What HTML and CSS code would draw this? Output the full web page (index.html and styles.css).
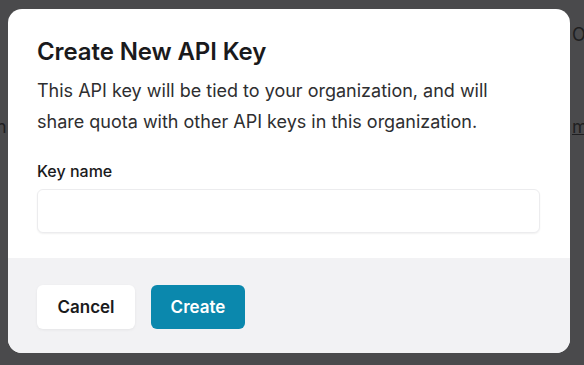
FILE: index.html
```html
<!DOCTYPE html>
<html lang="en">

<head>
    <meta charset="UTF-8">
    <meta name="viewport" content="width=device-width, initial-scale=1.0">
    <title>Create New API Key</title>
    <link rel="stylesheet" href="styles.css">
</head>

<body>
    <div class="page">
        <span class="bg-text bg-top">O:</span>
        <span class="bg-text bg-left">n</span>
        <span class="bg-text bg-right">m</span>
    </div>

    <div class="modal-container">
        <form class="modal">
            <div class="modal-body">
                <h2>Create New API Key</h2>
                <p>This API key will be tied to your organization, and will share quota with other API keys in this organization.</p>
                <label for="key_name">Key name</label>
                <input type="text" id="key_name" name="key_name">
            </div>
            <div class="modal-footer">
                <button type="button" class="btn-cancel">Cancel</button>
                <button type="submit" class="btn-create">Create</button>
            </div>
        </form>
    </div>
</body>

</html>
```

FILE: styles.css
```css
* {
    padding: 0;
    margin: 0;
    box-sizing: border-box;
    font-family: Inter, 'Noto Sans', sans-serif;
}

body {
    background: #4a4a4c;
    width: 584px;
    height: 365px;
    overflow: hidden;
    position: relative;
}

.page {
    height: 100%;
}

.bg-text {
    position: absolute;
    color: #1f1f21;
    font-size: 18px;
}

.bg-top {
    left: 572px;
    top: 24px;
}

.bg-left {
    left: -4px;
    top: 116px;
}

.bg-right {
    left: 572px;
    top: 116px;
    text-decoration: underline;
}

.modal-container {
    position: absolute;
    left: 8px;
    top: 9px;
}

.modal {
    width: 562px;
    height: 344px;
    background: #fff;
    border-radius: 14px;
    overflow: hidden;
    display: flex;
    flex-direction: column;
}

.modal-body {
    padding: 28px 29px 25px;
    display: flex;
    flex-direction: column;
}

.modal-body h2 {
    font-size: 24px;
    font-weight: 600;
    color: #1a1a1c;
    letter-spacing: -0.1px;
    line-height: 30px;
}

.modal-body p {
    margin-top: 8px;
    font-size: 18px;
    line-height: 31px;
    color: #2e2e30;
    max-width: 480px;
}

.modal-body label {
    margin-top: 24px;
    font-size: 16px;
    font-weight: 500;
    color: #1a1a1c;
    line-height: 20px;
}

.modal-body input {
    margin-top: 8px;
    height: 44px;
    width: 503px;
    border: 1px solid #ececee;
    border-radius: 6px;
    box-shadow: 0 1px 2px rgba(0, 0, 0, 0.06);
    background: #fff;
}

.modal-footer {
    flex: 1;
    background: #f2f2f4;
    display: flex;
    gap: 16px;
    padding: 27px 29px;
    align-items: flex-start;
}

.modal-footer button {
    height: 44px;
    border: none;
    border-radius: 6px;
    font-size: 17px;
    font-weight: 600;
    cursor: pointer;
}

.btn-cancel {
    width: 98px;
    background: #fff;
    color: #1a1a1c;
    box-shadow: 0 1px 3px rgba(0, 0, 0, 0.06);
}

.btn-create {
    width: 94px;
    background: #0b88ad;
    color: #fff;
}
```
